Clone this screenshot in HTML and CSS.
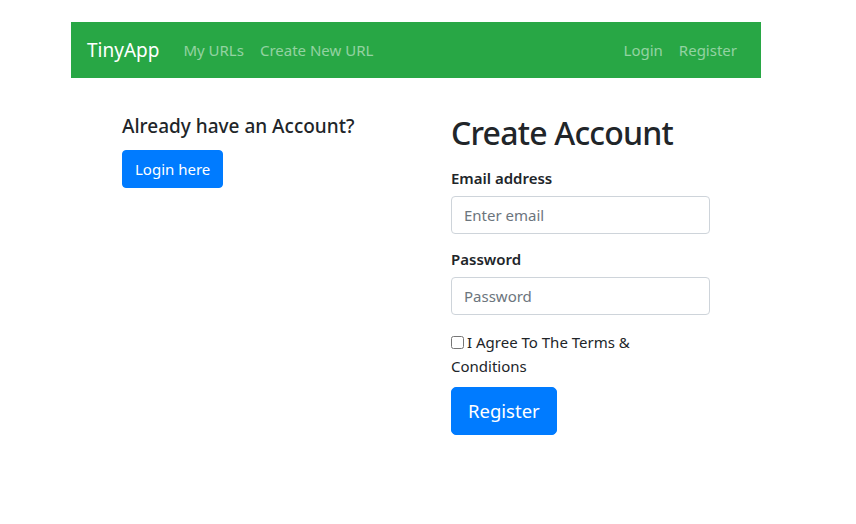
FILE: index.html
```html
<!DOCTYPE html>
<html lang="en">
<head>
<meta charset="utf-8">
<title>TinyApp - Register</title>
<link rel="stylesheet" href="styles.css">
</head>
<body>
<div class="page">
  <nav class="navbar">
    <a class="brand" href="#">TinyApp</a>
    <ul class="nav-links">
      <li><a href="#">My URLs</a></li>
      <li><a href="#">Create New URL</a></li>
    </ul>
    <ul class="nav-links nav-right">
      <li><a href="#">Login</a></li>
      <li><a href="#">Register</a></li>
    </ul>
  </nav>
  <main class="content">
    <section class="login-col">
      <h5 class="side-title">Already have an Account?</h5>
      <a class="btn btn-primary" href="#">Login here</a>
    </section>
    <section class="register-col">
      <h1 class="title">Create Account</h1>
      <form class="form">
        <div class="form-group">
          <label class="label" for="email">Email address</label>
          <input class="input" id="email" type="email" placeholder="Enter email">
        </div>
        <div class="form-group">
          <label class="label" for="password">Password</label>
          <input class="input" id="password" type="password" placeholder="Password">
        </div>
        <div class="check">
          <input class="check-box" type="checkbox" id="terms"><label for="terms">I Agree To The Terms &amp;<br>Conditions</label>
        </div>
        <button class="btn btn-primary btn-lg" type="submit">Register</button>
      </form>
    </section>
  </main>
</div>
</body>
</html>
```

FILE: styles.css
```css
* { box-sizing: border-box; }
html, body { margin: 0; padding: 0; background: #fff; }
body {
  font-family: "Noto Sans", "Open Sans", sans-serif;
  font-size: 15px;
  line-height: 24px;
  color: #212529;
}
.page {
  width: 690px;
  margin-left: 71px;
  padding-top: 22px;
}
.navbar {
  display: flex;
  align-items: center;
  height: 56px;
  padding: 8px 16px;
  background: #28a745;
}
.brand {
  color: #fff;
  font-size: 19px;
  line-height: 30px;
  text-decoration: none;
  margin-right: 16px;
}
.nav-links {
  display: flex;
  list-style: none;
  margin: 0;
  padding: 0;
}
.nav-links a {
  display: block;
  padding: 8px;
  font-size: 15px;
  color: rgba(255,255,255,0.5);
  text-decoration: none;
  line-height: 24px;
}
.nav-right { margin-left: auto; }
.content {
  display: flex;
  padding-left: 51px;
  padding-top: 32px;
}
.login-col {
  width: 329px;
  padding-top: 4px;
}
.register-col { width: 259px; }
.side-title {
  margin: 0 0 12px;
  font-size: 19px;
  font-weight: 500;
  line-height: 24px;
}
.title {
  margin: 0 0 10px;
  font-size: 32px;
  font-weight: 500;
  line-height: 46px;
  letter-spacing: -0.8px;
  white-space: nowrap;
}
.btn {
  display: inline-block;
  border: 1px solid transparent;
  border-radius: 4px;
  padding: 6px 12px;
  font-family: inherit;
  font-size: 15px;
  line-height: 24px;
  text-decoration: none;
  cursor: pointer;
}
.btn-primary { background: #007bff; border-color: #007bff; color: #fff; }
.btn-lg { font-size: 18.5px; line-height: 30px; padding: 8px 16px; border-radius: 5px; }
.form-group { margin-bottom: 13px; }
.label {
  display: block;
  font-weight: 600;
  margin-bottom: 6px;
}
.input {
  display: block;
  width: 100%;
  height: 38px;
  padding: 6px 12px;
  border: 1px solid #ced4da;
  border-radius: 4px;
  font-family: inherit;
  font-size: 15px;
  line-height: 24px;
  color: #495057;
}
.input::placeholder { color: #6c757d; }
.check {
  padding-top: 2px;
  margin-bottom: 9px;
  line-height: 24px;
}
.check-box {
  width: 13px;
  height: 13px;
  margin: 0 3px 0 0;
  vertical-align: -1px;
}
```
